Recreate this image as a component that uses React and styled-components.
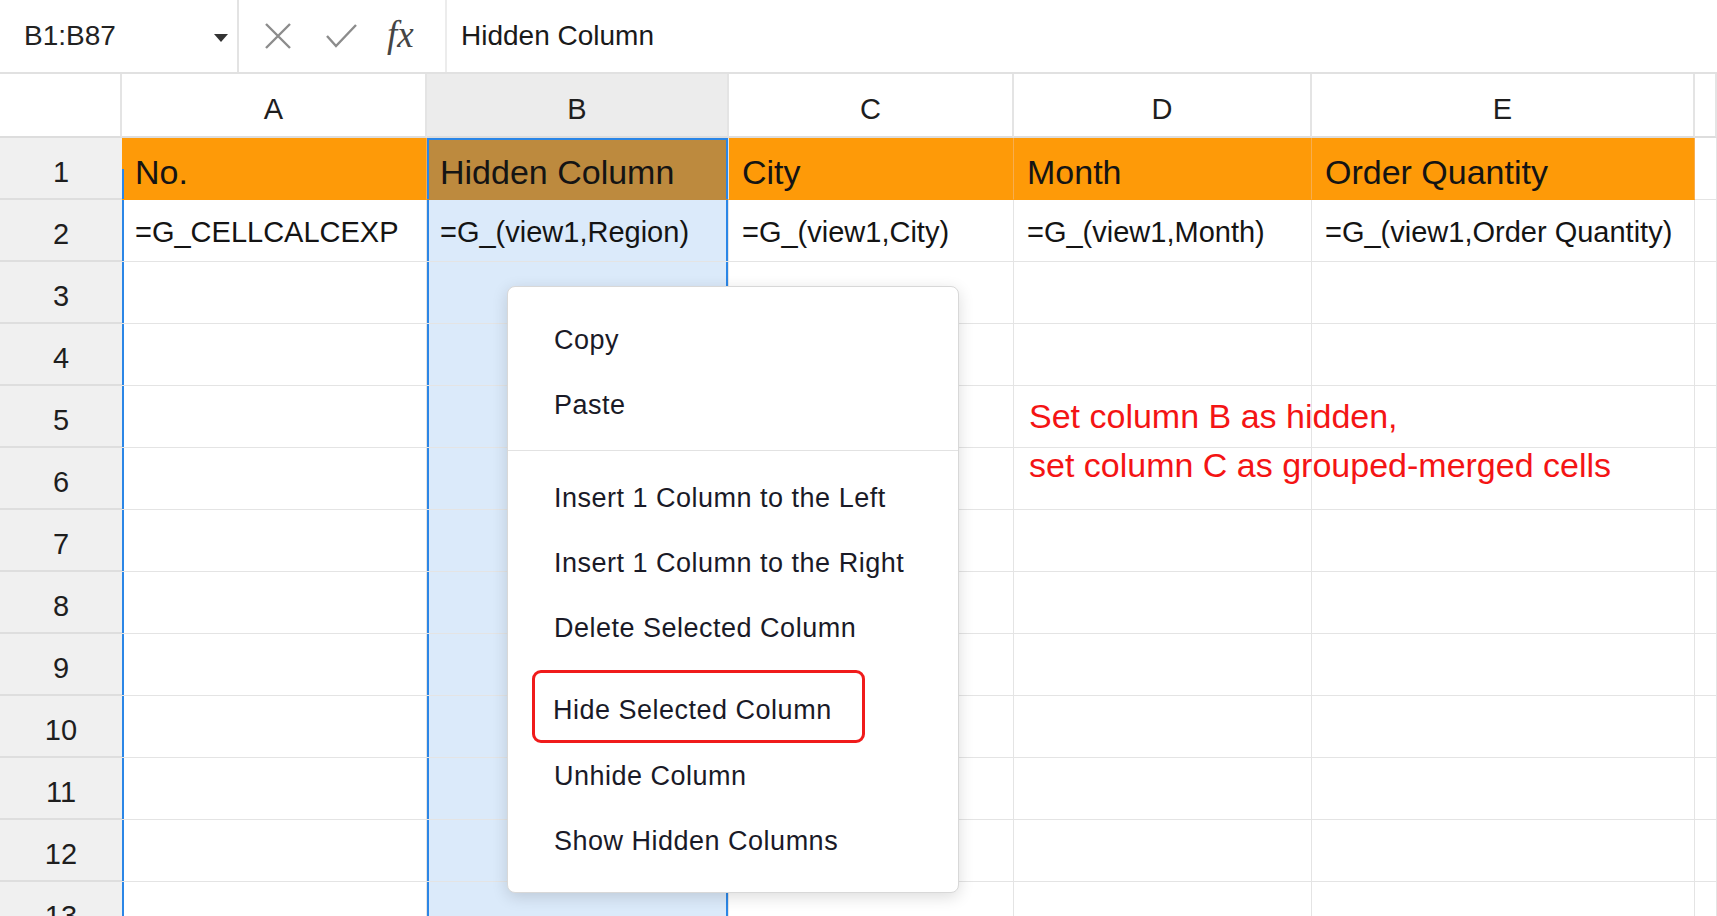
import React from "react";
import styled, { createGlobalStyle, css } from "styled-components";

const COLUMNS = "122px 305px 302px 285px 298px 383px 1fr";
const SELECT_BLUE = "#2b86e6";

const GlobalStyle = createGlobalStyle`
  html, body {
    margin: 0;
    padding: 0;
    background: #fff;
  }
  body {
    font-family: "Liberation Sans", Arial, Helvetica, sans-serif;
    color: #1d1d1d;
    overflow: hidden;
  }
`;

const Page = styled.div`
  position: relative;
  width: 1717px;
  height: 916px;
  overflow: hidden;
  background: #fff;
`;

/* ---------- formula bar ---------- */

const FormulaBar = styled.div`
  display: flex;
  height: 72px;
  border-bottom: 2px solid #e1e1e1;
`;

const NameBox = styled.div`
  width: 239px;
  box-sizing: border-box;
  display: flex;
  align-items: center;
  justify-content: space-between;
  padding: 0 9px 0 24px;
  border-right: 2px solid #e3e3e3;
  font-size: 28px;
  color: #222;
`;

const Caret = styled.span`
  width: 0;
  height: 0;
  border-left: 7px solid transparent;
  border-right: 7px solid transparent;
  border-top: 8px solid #333;
  margin-top: 3px;
`;

const Actions = styled.div`
  width: 208px;
  box-sizing: border-box;
  display: flex;
  align-items: center;
  padding-left: 25px;
  gap: 33px;
  border-right: 2px solid #ececec;
`;

const Fx = styled.span`
  font-family: "Liberation Serif", "Times New Roman", serif;
  font-style: italic;
  font-size: 37px;
  color: #454545;
  margin-left: -4px;
  margin-top: -4px;
`;

const FormulaInput = styled.div`
  flex: 1;
  display: flex;
  align-items: center;
  padding-left: 14px;
  font-size: 28px;
  color: #1a1a1a;
`;

const CancelIcon = () => (
  <svg width="28" height="28" viewBox="0 0 28 28">
    <path d="M2 2 L26 26 M26 2 L2 26" stroke="#8c8c8c" strokeWidth="2.4" fill="none" />
  </svg>
);

const ConfirmIcon = () => (
  <svg width="33" height="26" viewBox="0 0 33 26">
    <path d="M2 13 L11 23 L31 2" stroke="#8c8c8c" strokeWidth="2.4" fill="none" />
  </svg>
);

/* ---------- sheet grid ---------- */

const Sheet = styled.div`
  display: flex;
  flex-direction: column;
`;

const HeaderRow = styled.div`
  display: grid;
  grid-template-columns: ${COLUMNS};
  height: 64px;
`;

const ColHead = styled.div`
  display: flex;
  align-items: center;
  justify-content: center;
  box-sizing: border-box;
  border-right: 2px solid #e4e4e4;
  border-bottom: 2px solid #dddddd;
  background: ${(p) => (p.$active ? "#ececec" : "#fff")};
  font-size: 29px;
  color: #1e1e1e;
  padding-top: 8px;
`;

const Row = styled.div`
  display: grid;
  grid-template-columns: ${COLUMNS};
  height: 62px;
  flex-shrink: 0;
`;

const RowHead = styled.div`
  display: flex;
  align-items: center;
  justify-content: center;
  box-sizing: border-box;
  background: #f0f0f0;
  border-bottom: 2px solid #dedede;
  font-size: 29px;
  color: #1e1e1e;
  padding-top: 8px;
`;

const tones = {
  plain: css`
    background: #fff;
  `,
  title: css`
    background: #fe9a08;
    border-right-color: #f7ad4f;
    border-bottom-color: #fe9a08;
  `,
  titleSelected: css`
    background: #bd8a3e;
    border-bottom-color: #bd8a3e;
  `,
  selected: css`
    background: #dbeafa;
  `,
};

const Cell = styled.div`
  position: relative;
  display: flex;
  align-items: center;
  box-sizing: border-box;
  padding: ${(p) => (p.$title ? "8px 0 0 13px" : "3px 0 0 13px")};
  border-right: 1px solid #e4e4e4;
  border-bottom: 1px solid #e4e4e4;
  font-size: ${(p) => (p.$title ? "34px" : "29px")};
  color: #141414;
  white-space: nowrap;
  overflow: hidden;
  ${(p) => tones[p.$tone || "plain"]}
  ${(p) =>
    p.$column &&
    css`
      box-shadow: inset 2px 0 0 ${SELECT_BLUE}, inset -2px 0 0 ${SELECT_BLUE}
        ${p.$top ? `, inset 0 2px 0 ${SELECT_BLUE}` : ""};
    `}
  ${(p) =>
    p.$leftEdge &&
    css`
      box-shadow: inset 2px 0 0 ${SELECT_BLUE};
    `}
  ${(p) =>
    p.$halfEdge &&
    css`
      &::before {
        content: "";
        position: absolute;
        left: 0;
        bottom: 0;
        width: 2px;
        height: 50%;
        background: ${SELECT_BLUE};
      }
    `}
`;

/* ---------- context menu ---------- */

const Menu = styled.div`
  position: absolute;
  left: 507px;
  top: 286px;
  width: 452px;
  box-sizing: border-box;
  padding: 20px 0 19px;
  background: #fff;
  border: 1px solid #d8d8d8;
  border-radius: 8px;
  box-shadow: 0 4px 16px rgba(0, 0, 0, 0.14);
`;

const MenuItem = styled.div`
  height: 65px;
  display: flex;
  align-items: center;
  padding-left: 46px;
  padding-top: 2px;
  box-sizing: border-box;
  font-size: 27px;
  letter-spacing: 0.5px;
  color: #1a1a27;
`;

const MenuDivider = styled.div`
  height: 1px;
  margin: 13px 0 14px;
  background: #e2e2e2;
`;

const MarkedItem = styled(MenuItem)`
  height: 73px;
  width: 333px;
  margin: 10px 0 0 24px;
  padding: 8px 0 0 18px;
  border: 3px solid #f01b1b;
  border-radius: 9px;
`;

const Note = styled.div`
  position: absolute;
  left: 1029px;
  top: 392px;
  font-size: 34px;
  line-height: 49px;
  color: #f41414;
  white-space: nowrap;
`;

const letters = ["A", "B", "C", "D", "E", ""];

const titles = ["No.", "Hidden Column", "City", "Month", "Order Quantity", ""];
const formulas = [
  "=G_CELLCALCEXP",
  "=G_(view1,Region)",
  "=G_(view1,City)",
  "=G_(view1,Month)",
  "=G_(view1,Order Quantity)",
  "",
];

const cellProps = (rowIndex, colIndex) => {
  const props = {};
  const isB = colIndex === 1;
  if (rowIndex === 1) {
    props.$title = true;
    if (colIndex < 5) props.$tone = isB ? "titleSelected" : "title";
    if (isB) {
      props.$column = true;
      props.$top = true;
    }
    if (colIndex === 0) props.$halfEdge = true;
  } else {
    if (isB) {
      props.$tone = "selected";
      props.$column = true;
    }
    if (colIndex === 0) props.$leftEdge = true;
  }
  return props;
};

const rowText = (rowIndex, colIndex) => {
  if (rowIndex === 1) return titles[colIndex];
  if (rowIndex === 2) return formulas[colIndex];
  return "";
};

const menuTop = ["Copy", "Paste"];
const menuInsert = [
  "Insert 1 Column to the Left",
  "Insert 1 Column to the Right",
  "Delete Selected Column",
];
const menuBottom = ["Unhide Column", "Show Hidden Columns"];

const App = () => {
  const rows = Array.from({ length: 13 }, (_, i) => i + 1);

  return (
    <Page>
      <GlobalStyle />
      <FormulaBar>
        <NameBox>
          B1:B87
          <Caret />
        </NameBox>
        <Actions>
          <CancelIcon />
          <ConfirmIcon />
          <Fx>fx</Fx>
        </Actions>
        <FormulaInput>Hidden Column</FormulaInput>
      </FormulaBar>

      <Sheet>
        <HeaderRow>
          <ColHead />
          {letters.map((l, i) => (
            <ColHead key={i} $active={l === "B"}>
              {l}
            </ColHead>
          ))}
        </HeaderRow>
        {rows.map((r) => (
          <Row key={r}>
            <RowHead>{r}</RowHead>
            {letters.map((_, c) => (
              <Cell key={c} {...cellProps(r, c)}>
                {rowText(r, c)}
              </Cell>
            ))}
          </Row>
        ))}
      </Sheet>

      <Menu>
        {menuTop.map((t) => (
          <MenuItem key={t}>{t}</MenuItem>
        ))}
        <MenuDivider />
        {menuInsert.map((t) => (
          <MenuItem key={t}>{t}</MenuItem>
        ))}
        <MarkedItem>Hide Selected Column</MarkedItem>
        {menuBottom.map((t) => (
          <MenuItem key={t}>{t}</MenuItem>
        ))}
      </Menu>

      <Note>
        Set column B as hidden,
        <br />
        set column C as grouped-merged cells
      </Note>
    </Page>
  );
};

export default App;
